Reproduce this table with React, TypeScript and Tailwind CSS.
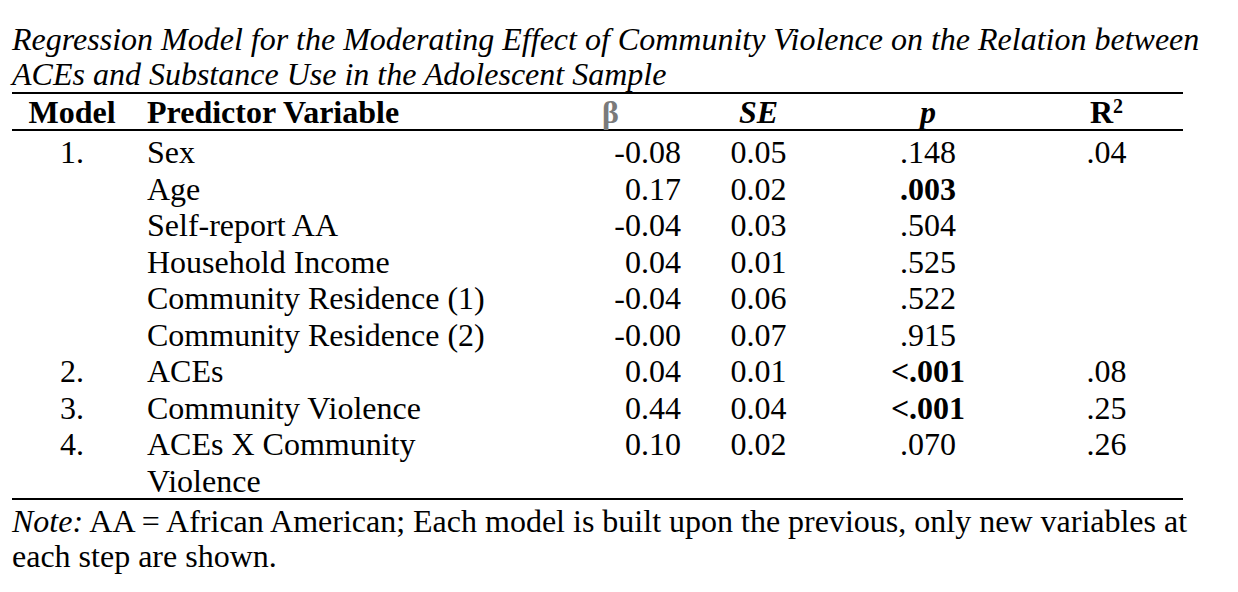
import React from "react";

type Row = {
  model?: string;
  name: React.ReactNode;
  beta: string;
  se: string;
  p: string;
  pBold?: boolean;
  r2?: string;
  tall?: boolean;
};

const rows: Row[] = [
  { model: "1.", name: "Sex", beta: "-0.08", se: "0.05", p: ".148", r2: ".04" },
  { name: "Age", beta: "0.17", se: "0.02", p: ".003", pBold: true },
  { name: "Self-report AA", beta: "-0.04", se: "0.03", p: ".504" },
  { name: "Household Income", beta: "0.04", se: "0.01", p: ".525" },
  { name: "Community Residence (1)", beta: "-0.04", se: "0.06", p: ".522" },
  { name: "Community Residence (2)", beta: "-0.00", se: "0.07", p: ".915" },
  { model: "2.", name: "ACEs", beta: "0.04", se: "0.01", p: "<.001", pBold: true, r2: ".08" },
  { model: "3.", name: "Community Violence", beta: "0.44", se: "0.04", p: "<.001", pBold: true, r2: ".25" },
  {
    model: "4.",
    name: (
      <>
        ACEs X Community
        <br />
        Violence
      </>
    ),
    beta: "0.10",
    se: "0.02",
    p: ".070",
    r2: ".26",
    tall: true,
  },
];

const cols = "grid grid-cols-[120px_429px_130px_135px_204px_153px]";

export default function App() {
  return (
    <div className="w-[1238px] h-[592px] bg-white text-black font-['Liberation_Serif','Times_New_Roman',serif] text-[32px]">
      <div className="pl-[12px] pt-[22px]">
        {/* Caption */}
        <div className="italic leading-[35px] whitespace-nowrap">
          <div className="h-[35px]">Regression Model for the Moderating Effect of Community Violence on the Relation between</div>
          <div className="h-[35px]">ACEs and Substance Use in the Adolescent Sample</div>
        </div>

        {/* Table */}
        <div className="w-[1171px] border-t-2 border-b-2 border-black">
          <div className={`${cols} h-[37px] font-bold leading-[36px] border-b-2 border-black`}>
            <div className="text-center">Model</div>
            <div className="pl-[15px]">Predictor Variable</div>
            <div className="pl-[41px] text-[#7a7a7a]">β</div>
            <div className="text-center italic">SE</div>
            <div className="text-center italic">p</div>
            <div className="text-center">
              R<span className="relative -top-[10px] text-[20px] leading-none">2</span>
            </div>
          </div>

          <div className="pt-[3px] leading-[36.5px]">
            {rows.map((r, i) => (
              <div key={i} className={`${cols} ${r.tall ? "h-[72px]" : "h-[36.5px]"}`}>
                <div className="text-center">{r.model}</div>
                <div className="pl-[15px]">{r.name}</div>
                <div className="text-right pr-[10px]">{r.beta}</div>
                <div className="text-center">{r.se}</div>
                <div className={`text-center ${r.pBold ? "font-bold" : ""}`}>{r.p}</div>
                <div className="text-center">{r.r2}</div>
              </div>
            ))}
          </div>
        </div>

        {/* Note */}
        <div className="pt-[4px] leading-[35px] whitespace-nowrap">
          <div className="h-[35px]">
            <span className="italic">Note:</span> AA = African American; Each model is built upon the previous, only new variables at
          </div>
          <div className="h-[35px]">each step are shown.</div>
        </div>
      </div>
    </div>
  );
}
